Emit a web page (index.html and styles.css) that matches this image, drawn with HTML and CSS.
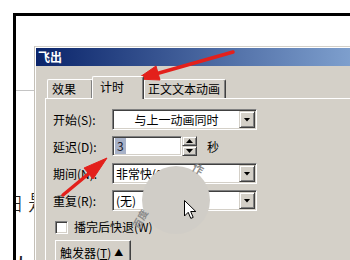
FILE: index.html
```html
<!DOCTYPE html>
<html>
<head>
<meta charset="utf-8">
<link rel="stylesheet" href="styles.css">
</head>
<body>
<div class="slide">
  <div class="slide-rule"></div>
  <div class="slide-text">由是</div>
  <div class="slide-text2">人对</div>
</div>

<div class="dialog">
  <div class="titlebar">飞出</div>
  <div class="dlg-body">
    <div class="tabs">
      <div class="tab t1">效果</div>
      <div class="tab sel">计时</div>
      <div class="tab t3">正文文本动画</div>
    </div>
    <div class="panel">
      <div class="row">
        <span class="lbl">开始(S):</span>
        <div class="field combo"><span class="ctext center">与上一动画同时</span><span class="dd"><i class="tri-down"></i></span></div>
      </div>
      <div class="row">
        <span class="lbl">延迟(D):</span>
        <div class="field spinfield"><span class="seltext">3</span></div>
        <div class="spin">
          <span class="spinbtn"><i class="tri-up"></i></span>
          <span class="spinbtn"><i class="tri-down small"></i></span>
        </div>
        <span class="unit">秒</span>
      </div>
      <div class="row">
        <span class="lbl">期间(N):</span>
        <div class="field combo"><span class="ctext">非常快(0.5 秒)</span><span class="dd"><i class="tri-down"></i></span></div>
      </div>
      <div class="row">
        <span class="lbl">重复(R):</span>
        <div class="field combo"><span class="ctext">(无)</span><span class="dd"><i class="tri-down"></i></span></div>
      </div>
      <div class="row check-row">
        <span class="checkbox"></span>
        <span class="check-label">播完后快退(W)</span>
      </div>
      <div class="btn-row">
        <div class="btn">触发器(<u>T</u>)<span class="caret">▲</span></div>
      </div>
    </div>
  </div>
</div>

<div class="spot"></div>
<span class="wm wm1">百度</span>
<span class="wm wm2">作</span>

<svg class="overlay" width="350" height="260" viewBox="0 0 350 260">
  <g fill="#e3201b" stroke="#e3201b" stroke-linejoin="round">
    <line x1="233" y1="52" x2="152" y2="75" stroke-width="3.5" stroke-linecap="round"/>
    <polygon points="137,79 156,66 160,80" stroke-width="1"/>
    <line x1="63" y1="195" x2="92" y2="171" stroke-width="3.5" stroke-linecap="round"/>
    <polygon points="107,158 84,168 93,179" stroke-width="1"/>
  </g>
</svg>

<svg class="cursor" width="14" height="20" viewBox="0 0 14 20">
  <path d="M0.5 0.5 L0.5 16 L4.2 12.3 L6.8 18.4 L9.2 17.4 L6.7 11.5 L11.8 11.5 Z" fill="#fff" stroke="#000" stroke-width="1" stroke-linejoin="miter"/>
</svg>
</body>
</html>
```

FILE: styles.css
```css
* { box-sizing: border-box; }
html, body { margin: 0; padding: 0; }
body {
  width: 350px;
  height: 260px;
  overflow: hidden;
  position: relative;
  background: #fff;
  font-family: "Noto Sans CJK SC", "Liberation Sans", sans-serif;
  font-size: 12px;
  color: #000;
}

/* slide behind the dialog */
.slide {
  margin: 13px 0 0 13px;
  height: 247px;
  border-top: 3px solid #000;
  border-left: 3px solid #000;
  overflow: hidden;
}
.slide-rule {
  margin-top: 74px;
  width: 20px;
  height: 1px;
  background: #c4c4c4;
}
.slide-text {
  margin: 96px 0 0 -15px;
  font-size: 22px;
  line-height: 26px;
  letter-spacing: 5px;
  color: #222;
  white-space: nowrap;
  font-weight: 300;
}
.slide-text2 {
  margin: 38px 0 0 -6px;
  font-size: 22px;
  line-height: 26px;
  letter-spacing: 2px;
  color: #222;
  white-space: nowrap;
}

/* dialog window */
.dialog {
  position: absolute;
  left: 34px;
  top: 46px;
  width: 316px;
  height: 214px;
  overflow: hidden;
  background: #d4d0c8;
  border-top: 1px solid #d4d0c8;
  border-left: 1px solid #c4c0b8;
  box-shadow: inset 1px 1px #fff;
  padding: 1px 0 0 1px;
}
.titlebar {
  height: 18px;
  line-height: 18px;
  padding-left: 2px;
  color: #fff;
  font-weight: bold;
  font-size: 12px;
  background: linear-gradient(90deg, #0a246a 0%, #a6caf0 135%);
}
.dlg-body {
  padding: 10px 0 0 9px;
}

/* tabs */
.tabs {
  display: flex;
  align-items: flex-end;
  height: 22px;
  padding-left: 2px;
}
.tab {
  height: 19px;
  line-height: 17px;
  background: #d4d0c8;
  border-top: 1px solid #fff;
  border-left: 1px solid #fff;
  border-right: 1px solid #404040;
  box-shadow: inset -1px 0 #808080;
  border-radius: 2px 2px 0 0;
  white-space: nowrap;
}
.t1 { width: 46px; padding-left: 4px; }
.t3 { width: 82px; padding-left: 3px; }
.tab.sel {
  position: relative;
  z-index: 1;
  width: 52px;
  height: 23px;
  margin-left: -1px;
  margin-bottom: -1px;
  padding-left: 7px;
  line-height: 19px;
}

/* tab panel */
.panel {
  height: 170px;
  border-top: 1px solid #fff;
  border-left: 1px solid #fff;
  padding: 10px 0 0 7px;
  display: flex;
  flex-direction: column;
  gap: 6px;
}
.row {
  display: flex;
  align-items: center;
  height: 21px;
  flex: none;
}
.lbl {
  width: 59px;
  white-space: nowrap;
}

/* sunken fields */
.field {
  height: 21px;
  background: #fff;
  border: 1px solid;
  border-color: #808080 #fff #fff #808080;
  box-shadow: inset 1px 1px #404040, inset -1px -1px #d4d0c8;
  display: flex;
  align-items: center;
  padding: 1px;
}
.combo { width: 145px; }
.ctext {
  flex: 1;
  padding-left: 2px;
  line-height: 16px;
  white-space: nowrap;
  overflow: hidden;
}
.ctext.center { text-align: center; padding-left: 0; }

/* raised button look */
.dd, .spinbtn {
  background: #d4d0c8;
  border: 1px solid;
  border-color: #d4d0c8 #404040 #404040 #d4d0c8;
  box-shadow: inset 1px 1px #fff, inset -1px -1px #808080;
  display: flex;
  align-items: center;
  justify-content: center;
}
.dd { width: 16px; height: 17px; }
.tri-down {
  display: block;
  width: 7px;
  height: 4px;
  background: #000;
  clip-path: polygon(0 0, 100% 0, 50% 100%);
}
.tri-up {
  display: block;
  width: 7px;
  height: 4px;
  background: #000;
  clip-path: polygon(50% 0, 100% 100%, 0 100%);
}

/* spinner */
.spinfield { width: 70px; height: 20px; align-self: flex-start; }
.seltext {
  background: #a8b2c8;
  color: #1a1a2a;
  line-height: 16px;
  padding: 0 2px;
  margin-left: 1px;
}
.spin {
  width: 15px;
  height: 20px;
  align-self: flex-start;
  display: flex;
  flex-direction: column;
}
.spinbtn { height: 10px; width: 15px; }
.unit { margin-left: 10px; }

/* checkbox */
.check-row {
  height: 17px;
  align-items: flex-end;
}
.checkbox {
  margin-left: 2px;
  width: 13px;
  height: 13px;
  background: #fff;
  border: 1px solid;
  border-color: #808080 #fff #fff #808080;
  box-shadow: inset 1px 1px #404040, inset -1px -1px #d4d0c8;
}
.check-label {
  margin-left: 6px;
  line-height: 14px;
  white-space: nowrap;
}

/* trigger button */
.btn-row { display: flex; flex: none; }
.btn {
  margin-left: 2px;
  width: 76px;
  height: 24px;
  border: 1px solid;
  border-color: #fff #404040 #404040 #fff;
  box-shadow: inset -1px -1px #808080;
  display: flex;
  align-items: center;
  padding-left: 4px;
  white-space: nowrap;
}
.caret { font-size: 9px; margin-left: 3px; }

/* overlays */
.spot {
  position: absolute;
  left: 142px;
  top: 166px;
  width: 68px;
  height: 68px;
  border-radius: 50%;
  background: #d0cdc7;
}
.wm {
  position: absolute;
  color: #8c8c8c;
  font-weight: bold;
  font-size: 10px;
  line-height: 10px;
  white-space: nowrap;
}
.wm1 { left: 130px; top: 214px; transform: rotate(-60deg); }
.wm2 { left: 193px; top: 163px; transform: rotate(30deg); font-size: 11px; }
.overlay {
  position: absolute;
  left: 0;
  top: 0;
}
.cursor {
  position: absolute;
  left: 184px;
  top: 200px;
}
```
